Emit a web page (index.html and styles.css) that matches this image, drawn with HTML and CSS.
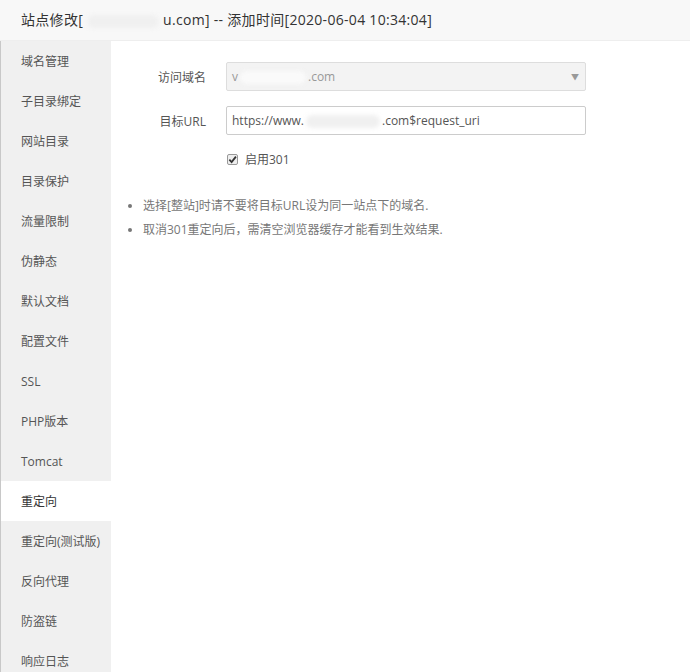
FILE: index.html
```html
<!DOCTYPE html>
<html lang="zh-CN">
<head>
  <meta charset="UTF-8" />
  <title>站点修改</title>
  <link rel="stylesheet" href="styles.css">
</head>
<body>
  <div class="layer">
    <div class="layer-title">站点修改[<span class="blur blur-title"></span>u.com] -- 添加时间[2020-06-04 10:34:04]</div>

    <div class="layer-main">
      <ul class="side-menu">
        <li>域名管理</li>
        <li>子目录绑定</li>
        <li>网站目录</li>
        <li>目录保护</li>
        <li>流量限制</li>
        <li>伪静态</li>
        <li>默认文档</li>
        <li>配置文件</li>
        <li>SSL</li>
        <li>PHP版本</li>
        <li>Tomcat</li>
        <li class="active">重定向</li>
        <li>重定向(测试版)</li>
        <li>反向代理</li>
        <li>防盗链</li>
        <li>响应日志</li>
      </ul>

      <div class="content">
        <div class="form-row">
          <span class="form-label">访问域名</span>
          <div class="form-input select">
            <span>v<span class="blur blur-domain"></span>.com</span>
            <span class="arrow">▼</span>
          </div>
        </div>
        <div class="form-row">
          <span class="form-label">目标URL</span>
          <div class="form-input">https://www.<span class="blur blur-url"></span>.com$request_uri</div>
        </div>
        <div class="check-row">
          <span class="checkbox">
            <svg width="9" height="9" viewBox="0 0 10 10"><path d="M1.5 5.2 L4 7.8 L8.8 1.8" fill="none" stroke="#333" stroke-width="2"/></svg>
          </span>
          启用301
        </div>

        <ul class="tips">
          <li>选择[整站]时请不要将目标URL设为同一站点下的域名.</li>
          <li>取消301重定向后，需清空浏览器缓存才能看到生效结果.</li>
        </ul>
      </div>
    </div>
  </div>
</body>
</html>
```

FILE: styles.css
```css
* {
  box-sizing: border-box;
}

body {
  margin: 0;
  background: #fff;
  font-family: "Open Sans", "Noto Sans CJK SC", sans-serif;
  color: #333;
}

.layer {
  width: 690px;
  height: 672px;
  overflow: hidden;
}

.layer-title {
  height: 41px;
  line-height: 40px;
  padding-left: 21px;
  font-size: 14px;
  letter-spacing: 0.3px;
  color: #333;
  background: #f8f8f8;
  border-bottom: 1px solid #eee;
}

.blur {
  display: inline-block;
  vertical-align: middle;
  height: 13px;
  border-radius: 7px;
  background: #f0f0f0;
  filter: blur(2px);
}

.blur-title {
  width: 72px;
  margin: 0 4px;
}

.blur-domain {
  width: 66px;
  margin: 0 2px;
  background: #fafafa;
}

.blur-url {
  width: 74px;
  margin: 0 2px;
}

.layer-main {
  display: flex;
}

.side-menu {
  list-style: none;
  margin: 0;
  padding: 0;
  width: 111px;
  flex-shrink: 0;
  background: #f0f0f0;
  border-left: 1px solid #c8c8c8;
  min-height: 640px;
}

.side-menu li {
  height: 40px;
  line-height: 41px;
  padding-left: 20px;
  font-size: 12px;
  color: #555;
}

.side-menu li.active {
  background: #fff;
  color: #333;
}

.content {
  flex: 1;
  padding-top: 21px;
  font-size: 12px;
}

.form-row {
  display: flex;
  align-items: center;
  margin-bottom: 15px;
}

.form-label {
  width: 95px;
  text-align: right;
  color: #555;
  margin-right: 20px;
}

.form-input {
  width: 360px;
  height: 29px;
  line-height: 28px;
  padding: 0 5px;
  border: 1px solid #ccc;
  border-radius: 2px;
  color: #555;
  font-size: 12px;
}

.select {
  display: flex;
  justify-content: space-between;
  background: #f3f3f3;
  border-color: #ddd;
  color: #999;
}

.select .arrow {
  font-size: 8px;
  color: #999;
  margin-right: 1px;
}

.check-row {
  display: flex;
  align-items: center;
  margin-left: 116px;
  color: #555;
}

.checkbox {
  display: inline-flex;
  align-items: center;
  justify-content: center;
  width: 11px;
  height: 11px;
  border: 1px solid #999;
  border-radius: 2px;
  background: #eee;
  margin-right: 7px;
}

.tips {
  margin: 26px 0 0;
  padding-left: 32px;
  color: #777;
  font-size: 12px;
}

.tips li {
  line-height: 24px;
}
```
